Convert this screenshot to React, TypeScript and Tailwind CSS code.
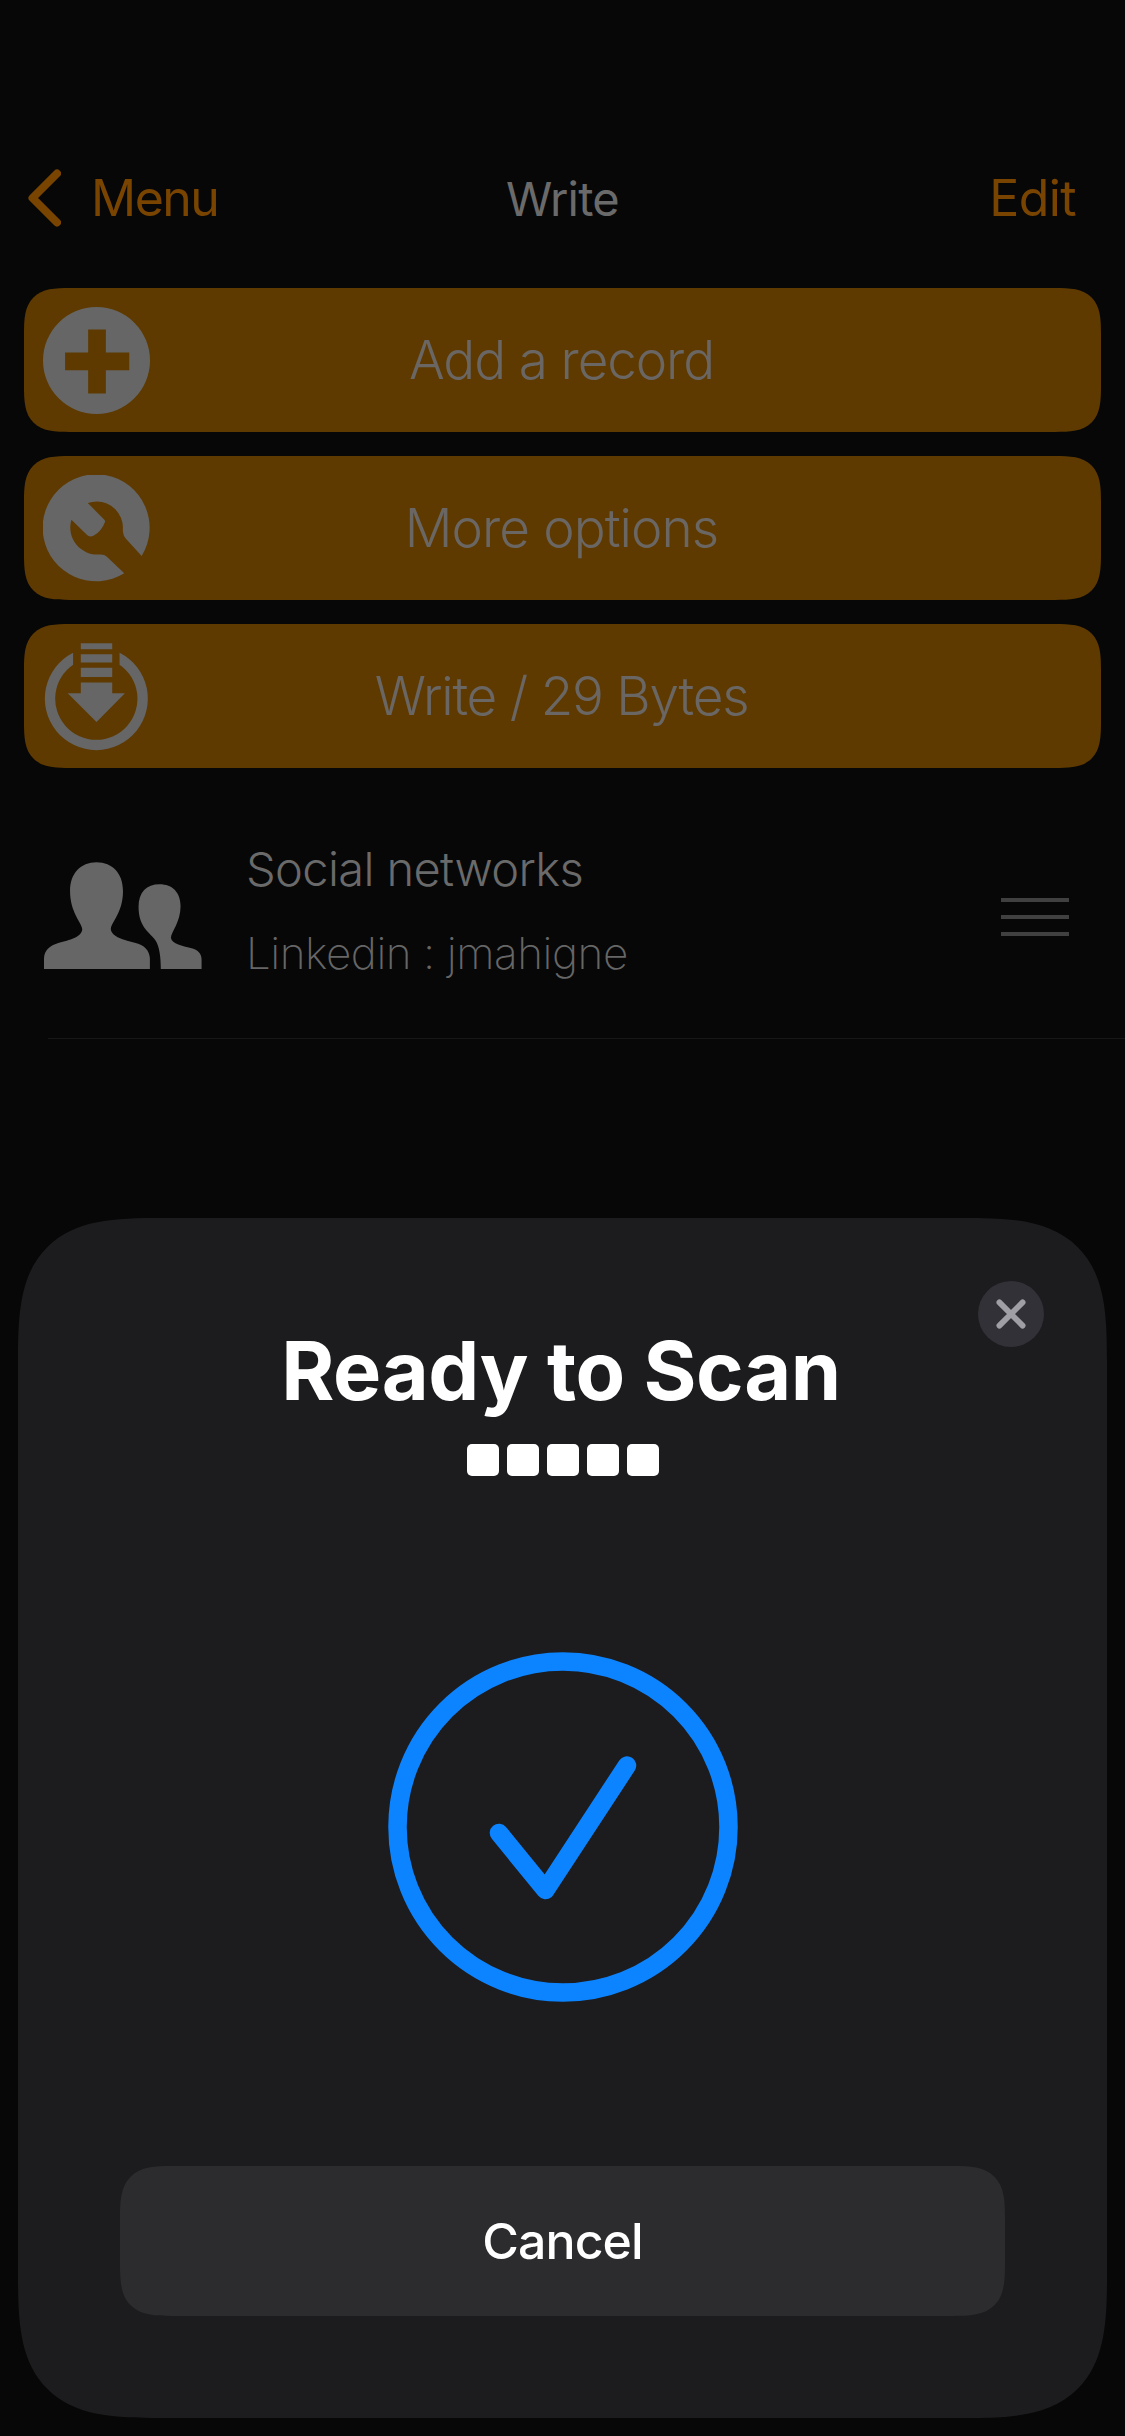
import type { ReactNode } from "react";

function PlusIcon() {
  return (
    <svg viewBox="0 0 320 320" className="size-[107px]" fill="#666666">
      <path
        fillRule="evenodd"
        d="M160 0A160 160 0 1 1 160 320A160 160 0 1 1 160 0ZM135 67V136H66V189H135V259H188V189H258V136H188V67Z"
      />
    </svg>
  );
}

function WrenchIcon() {
  return (
    <svg viewBox="129 104 320 320" className="size-[107px]" fill="#666666">
      <path d="M424 346A160 160 0 1 0 372 398L324 352Q313 340 296 342A81 81 0 0 1 214 238L260 283Q268 291 281 285Q304 272 314 245Q316 240 311 236L263 188Q276 183 290 183A79 79 0 0 1 368 262Q366 282 377 295Z" />
    </svg>
  );
}

function DownloadIcon() {
  return (
    <svg viewBox="129 608 320 320" className="size-[107px] overflow-visible" fill="#666666">
      <path d="M219 637A154 154 0 1 0 358 637V673A123 123 0 1 1 219 673Z" />
      <path d="M242 609H336V627H242ZM242 642H336V666H242ZM242 682H336V710H242ZM242 726H336V758H374L289 844L203 758H242Z" />
    </svg>
  );
}

function PeopleIcon() {
  return (
    <svg viewBox="106 125 376 321" preserveAspectRatio="none" className="h-[107px] w-[158px]" fill="#666666">
      <path d="M106 446V414C107 390 118 376 142 367C165 360 197 350 197 326C196 307 168 277 168 212C168 160 193 126 231 126C269 126 294 160 294 212C294 277 266 306 265 326C266 350 300 360 322 367C345 374 357 390 358 414V446Z" />
      <path d="M384 446C384 412 381 379 371 360C361 339 331 324 331 260C331 216 350 192 381 192C412 192 431 217 431 258C431 305 409 335 408 352C410 371 437 377 455 383C474 389 481 401 481 418V446Z" />
    </svg>
  );
}

function ActionButton({ icon, label, tracking }: { icon: ReactNode; label: string; tracking: string }) {
  return (
    <button className="grid h-[144px] grid-cols-[107px_1fr_107px] items-center rounded-[46px] bg-[#5e3a00] px-[19px] text-[53px] leading-none font-light text-[#6a6664] [corner-shape:superellipse(1.6)]">
      {icon}
      <span className={`pr-[2px] ${tracking}`}>{label}</span>
    </button>
  );
}

function ScanSheet() {
  return (
    <section className="absolute inset-x-[18px] top-[1218px] flex h-[1200px] flex-col items-center rounded-[143px] bg-[#1c1c1e] pt-[63px] text-white [corner-shape:superellipse(1.6)]">
      <button aria-label="Close" className="mr-[63px] flex size-[66px] items-center justify-center self-end rounded-full bg-[#323137]">
        <svg viewBox="0 0 30 30" className="size-[30px]" fill="none" stroke="#a09fa6" strokeWidth="5.8" strokeLinecap="round">
          <path d="M3.4 3.4L26.6 26.6M26.6 3.4L3.4 26.6" />
        </svg>
      </button>
      <h1 className="-mt-[24px] pr-[3px] text-[81px] leading-[96px] font-bold tracking-[-0.4px]">Ready to Scan</h1>
      <div className="mt-[25px] flex gap-2">
        {[0, 1, 2, 3, 4].map((n) => (
          <span key={n} className="size-8 rounded-[5px] bg-white" />
        ))}
      </div>
      <svg viewBox="0 0 350 350" className="mt-[176px] size-[350px]" fill="none" stroke="#0d84ff" strokeWidth="18.5" strokeLinecap="round" strokeLinejoin="round">
        <circle cx="175" cy="175" r="165.5" />
        <path d="M111 181L157.5 238L239 113.5" />
      </svg>
      <button className="mt-[164px] h-[150px] w-[885px] rounded-[52px] bg-[#2c2c2e] text-[50px] leading-none font-medium tracking-[-0.9px] [corner-shape:superellipse(1.6)]">
        Cancel
      </button>
    </section>
  );
}

export default function App() {
  return (
    <main className="relative h-[2436px] w-[1125px] overflow-hidden bg-[#070707] font-[Inter,sans-serif]">
      <header className="grid h-[288px] grid-cols-3 items-center pt-[108px] pr-[49px] pl-[28px] text-[50px] leading-none text-[#784400]">
        <button className="flex items-center gap-[30px]">
          <svg viewBox="0 0 33 58" className="h-[58px] w-[33px]" fill="none" stroke="#784400" strokeWidth="8" strokeLinecap="round" strokeLinejoin="round">
            <path d="M29 4.5L4.5 29L29 53.5" />
          </svg>
          <span className="tracking-[-1.5px]">Menu</span>
        </button>
        <h2 className="pt-px pl-[21px] text-center text-[47px] tracking-[-0.8px] text-[#6a6a6a]">Write</h2>
        <button className="text-right tracking-[-0.6px]">Edit</button>
      </header>

      <div className="flex flex-col gap-6 px-6">
        <ActionButton icon={<PlusIcon />} label="Add a record" tracking="tracking-[-1.1px]" />
        <ActionButton icon={<WrenchIcon />} label="More options" tracking="tracking-[-0.91px]" />
        <ActionButton icon={<DownloadIcon />} label="Write / 29 Bytes" tracking="tracking-[-1.22px]" />
      </div>

      <div className="flex h-[270px] pt-[59px] pr-[56px] pl-[44px]">
        <div className="mt-[35px]">
          <PeopleIcon />
        </div>
        <div className="ml-[44px] flex-1 leading-[84px]">
          <p className="text-[47px] font-[350] tracking-[-0.62px] text-[#6a6a6a]">Social networks</p>
          <p className="text-[44px] font-extralight tracking-[-0.46px] text-[#666666]">Linkedin : jmahigne</p>
        </div>
        <div className="mt-[71px] flex flex-col gap-[13px]">
          <span className="h-[4px] w-[68px] bg-[#404040]" />
          <span className="h-[4px] w-[68px] bg-[#404040]" />
          <span className="h-[4px] w-[68px] bg-[#404040]" />
        </div>
      </div>
      <hr className="ml-12 h-px border-0 bg-[#171717]" />

      <ScanSheet />
    </main>
  );
}
